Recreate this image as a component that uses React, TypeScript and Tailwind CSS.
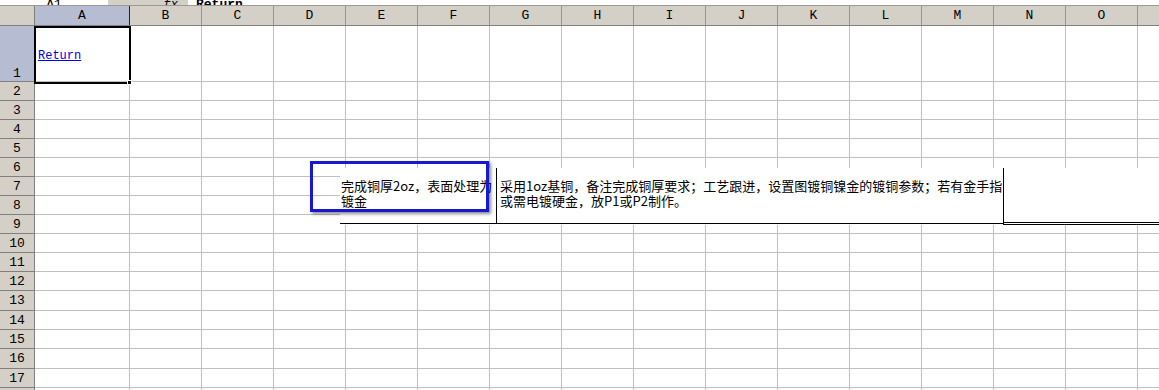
import React from "react";

const COLS = ["A", "B", "C", "D", "E", "F", "G", "H", "I", "J", "K", "L", "M", "N", "O", "P"];
// row heights of the body rows 2..18 (px, incl. bottom gridline)
const ROWS = [19, 19, 19, 19, 19, 19, 19, 19, 19, 19, 19, 20, 19, 19, 20, 19, 19];

const mono = { fontFamily: '"Liberation Mono", "DejaVu Sans Mono", monospace' };
const cjk = { fontFamily: '"Noto Sans CJK SC", "Noto Sans", sans-serif' };

function colWidth(c: string) {
  return c === "A" ? "w-[95px]" : "w-[72px]";
}

export default function App() {
  return (
    <div className="relative h-[390px] w-[1159px] overflow-hidden bg-white">
      {/* clipped formula bar */}
      <div className="flex h-[6px] overflow-hidden border-b border-[#9d9a93] bg-white">
        <div className="flex w-[108px] shrink-0 items-end justify-center">
          <span className="-mb-[7px] text-[13px] leading-[14px] text-black" style={mono}>A1</span>
        </div>
        <div className="flex w-[80px] shrink-0 items-end justify-end bg-[#d4d0c8] pr-[10px]">
          <span className="-mb-[7px] text-[12px] leading-[14px] text-black italic" style={mono}>fx</span>
        </div>
        <div className="flex flex-1 items-end pl-[8px]">
          <span className="-mb-[7px] text-[13px] font-bold leading-[14px] text-black" style={mono}>Return</span>
        </div>
      </div>

      {/* column header */}
      <div className="flex h-[20px] border-b border-[#808080] bg-[#d4d0c8]">
        <div className="w-[35px] shrink-0 border-r border-[#808080]" />
        {COLS.map((c) => (
          <div
            key={c}
            className={`${colWidth(c)} flex shrink-0 items-center justify-center border-r text-[13px] leading-none text-black ${
              c === "A" ? "border-[#0a246a] bg-[#b6bdd2]" : "border-[#9a978f]"
            }`}
            style={mono}
          >
            {c}
          </div>
        ))}
      </div>

      {/* row 1 */}
      <div className="flex h-[56px]">
        <div className="flex w-[35px] shrink-0 items-end justify-center border-r border-b border-[#808080] bg-[#b6bdd2] pb-[1px] text-[13px] leading-none text-black" style={mono}>
          1
        </div>
        {COLS.map((c) => (
          <div key={c} className={`${colWidth(c)} flex shrink-0 items-center border-r border-b border-[#c0c0c0] pt-[5px] pl-[3px]`}>
            {c === "A" && (
              <span className="text-[12px] leading-none text-[#0000e0] underline" style={mono}>
                Return
              </span>
            )}
          </div>
        ))}
      </div>

      {/* rows 2.. */}
      {ROWS.map((h, i) => (
        <div key={i} className="flex" style={{ height: h }}>
          <div className="flex w-[35px] shrink-0 items-center justify-center border-r border-b border-[#808080] bg-[#d4d0c8] text-[13px] leading-none text-black" style={mono}>
            {i + 2}
          </div>
          {COLS.map((c) => (
            <div key={c} className={`${colWidth(c)} shrink-0 border-r border-b border-[#c0c0c0]`} />
          ))}
        </div>
      ))}

      {/* A1 selection */}
      <div className="pointer-events-none absolute top-[26px] left-[34px] h-[58px] w-[97px] border-2 border-black" />
      <div className="absolute top-[80px] left-[127px] h-[5px] w-[5px] border border-white bg-black" />

      {/* pasted table picture */}
      <div className="absolute top-[168px] left-[340px] flex h-[57px] w-[830px] bg-white text-[13px] leading-[15px] text-black" style={cjk}>
        <div className="h-[56px] w-[156px] shrink-0 overflow-hidden border-b border-black pt-[10px] pl-[1px] whitespace-nowrap">
          完成铜厚2oz，表面处理为
          <br />
          镀金
        </div>
        <div className="h-[56px] w-[507px] shrink-0 overflow-hidden border-b border-l border-black pt-[10px] pl-[3px] whitespace-nowrap">
          采用1oz基铜，备注完成铜厚要求；工艺跟进，设置图镀铜镍金的镀铜参数；若有金手指
          <br />
          或需电镀硬金，放P1或P2制作。
        </div>
        <div className="h-[57px] flex-1 border-l border-b-[3px] border-double border-black" />
      </div>

      {/* blue highlight box */}
      <div className="absolute top-[161px] left-[310px] h-[51px] w-[179px] border-[3px] border-[#1818d4] shadow-[2px_2px_3px_rgba(0,0,0,0.45)]" />
    </div>
  );
}
